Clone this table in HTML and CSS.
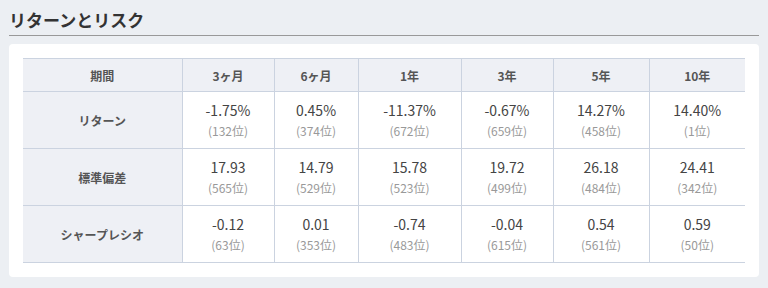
FILE: index.html
```html
<!DOCTYPE html>
<html lang="ja">
<head>
<meta charset="utf-8">
<link rel="stylesheet" href="styles.css">
</head>
<body>
<h2 class="title">リターンとリスク</h2>
<div class="card">
  <table class="risk">
    <colgroup>
      <col class="c-label"><col class="c-a"><col class="c-b"><col class="c-c"><col class="c-a"><col class="c-d"><col class="c-d">
    </colgroup>
    <thead>
      <tr><th>期間</th><th>3ヶ月</th><th>6ヶ月</th><th>1年</th><th>3年</th><th>5年</th><th>10年</th></tr>
    </thead>
    <tbody>
      <tr>
        <th>リターン</th>
        <td><div class="v">-1.75%</div><div class="r">(132位)</div></td>
        <td><div class="v">0.45%</div><div class="r">(374位)</div></td>
        <td><div class="v">-11.37%</div><div class="r">(672位)</div></td>
        <td><div class="v">-0.67%</div><div class="r">(659位)</div></td>
        <td><div class="v">14.27%</div><div class="r">(458位)</div></td>
        <td><div class="v">14.40%</div><div class="r">(1位)</div></td>
      </tr>
      <tr>
        <th>標準偏差</th>
        <td><div class="v">17.93</div><div class="r">(565位)</div></td>
        <td><div class="v">14.79</div><div class="r">(529位)</div></td>
        <td><div class="v">15.78</div><div class="r">(523位)</div></td>
        <td><div class="v">19.72</div><div class="r">(499位)</div></td>
        <td><div class="v">26.18</div><div class="r">(484位)</div></td>
        <td><div class="v">24.41</div><div class="r">(342位)</div></td>
      </tr>
      <tr>
        <th>シャープレシオ</th>
        <td><div class="v">-0.12</div><div class="r">(63位)</div></td>
        <td><div class="v">0.01</div><div class="r">(353位)</div></td>
        <td><div class="v">-0.74</div><div class="r">(483位)</div></td>
        <td><div class="v">-0.04</div><div class="r">(615位)</div></td>
        <td><div class="v">0.54</div><div class="r">(561位)</div></td>
        <td><div class="v">0.59</div><div class="r">(50位)</div></td>
      </tr>
    </tbody>
  </table>
</div>
</body>
</html>
```
FILE: styles.css
```css
html, body {
  margin: 0;
  padding: 0;
}
body {
  background: #eceff3;
  padding: 0 9px;
  font-family: "Noto Sans CJK JP", "Noto Sans", sans-serif;
  color: #444;
}
.title {
  margin: 0 0 8px 0;
  padding: 7px 0 2px 0;
  font-size: 17px;
  line-height: 26px;
  font-weight: 700;
  color: #333;
  border-bottom: 1px solid #999;
}
.card {
  background: #fff;
  border-radius: 4px;
  padding: 14px;
}
.risk {
  width: 722px;
  table-layout: fixed;
  border-collapse: collapse;
}
.c-label { width: 159px; }
.c-a { width: 92px; }
.c-b { width: 84px; }
.c-c { width: 103px; }
.c-d { width: 96px; }
.risk th, .risk td {
  border: 1px solid #cbd3e0;
  text-align: center;
  padding: 0;
}
.risk tr > :first-child { border-left: none; }
.risk tr > :last-child { border-right: none; }
.risk thead th {
  background: #eef0f5;
  height: 32px;
  font-size: 12px;
  font-weight: 700;
  color: #555;
}
.risk tbody th {
  background: #eef0f5;
  font-size: 12px;
  font-weight: 700;
  color: #555;
  height: 56px;
}
.risk td {
  padding: 8px 0 7px;
  height: 41px;
  vertical-align: middle;
}
.v {
  font-size: 14px;
  line-height: 20px;
  color: #444;
}
.r {
  font-size: 12px;
  line-height: 21px;
  color: #999;
}
```
